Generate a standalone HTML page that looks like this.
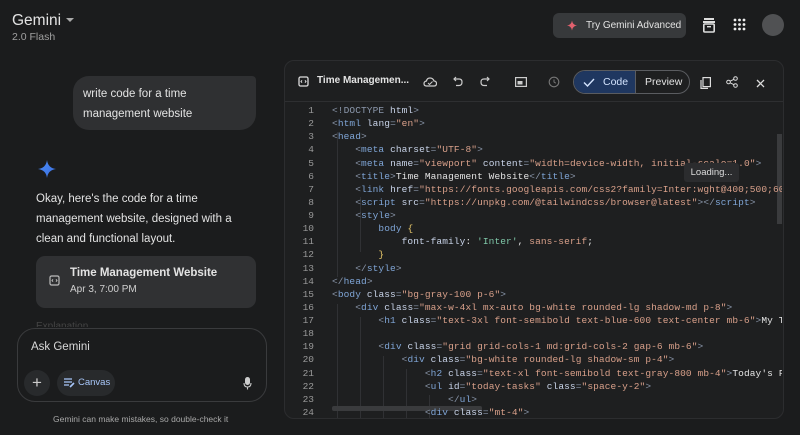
<!DOCTYPE html>
<html><head><style>
*{box-sizing:border-box;margin:0;padding:0}
body{width:800px;height:435px;background:#1b1c1d;font-family:"Liberation Sans",sans-serif;color:#e3e3e3;position:relative;overflow:hidden}
.abs{position:absolute}
.code{font-family:"Liberation Mono",monospace;font-size:9.5px;letter-spacing:0.1px;white-space:pre;color:#e3e3e3}
.ln{position:absolute;left:290px;width:24px;text-align:right;color:#9a9a9a;font-family:"Liberation Mono",monospace;font-size:9.5px}
.p{color:#8b97ab}.t{color:#7fa5d6}.a{color:#c8d3e8}.s{color:#d9a08a}.y{color:#e8c86a}.g{color:#7fc7a8}
</style></head><body>
<div class="abs" style="left:12px;top:12px;font-size:15.5px;color:#e3e3e3">Gemini</div>
<div class="abs" style="left:66px;top:18px;width:0;height:0;border-left:4px solid transparent;border-right:4px solid transparent;border-top:4px solid #aaa"></div>
<div class="abs" style="left:12px;top:31px;font-size:10.5px;color:#a0a0a0">2.0 Flash</div>

<div class="abs" style="left:553px;top:13px;width:133px;height:25px;background:#37393b;border-radius:6px"></div>
<svg class="abs" style="left:567px;top:20px" width="10" height="11" viewBox="0 0 10 10"><path d="M5 0Q5.6 4.4 10 5Q5.6 5.6 5 10Q4.4 5.6 0 5Q4.4 4.4 5 0Z" fill="#e2616e"/></svg>
<div class="abs" style="left:586px;top:20px;font-size:10px;color:#e3e3e3">Try Gemini Advanced</div>
<svg class="abs" style="left:702px;top:17px" width="14" height="16" viewBox="0 0 14 16"><rect x="2" y="1" width="10" height="2" fill="#ddd"/><rect x="1" y="4" width="12" height="2" fill="#ddd"/><rect x="1.8" y="7" width="10.4" height="8" rx="1" fill="none" stroke="#ddd" stroke-width="1.6"/><rect x="5" y="9" width="4" height="1.4" fill="#ddd"/></svg>
<svg class="abs" style="left:733px;top:18px" width="13" height="13"><g fill="#eee"><circle cx="2" cy="2" r="1.4"/><circle cx="6.5" cy="2" r="1.4"/><circle cx="11" cy="2" r="1.4"/><circle cx="2" cy="6.5" r="1.4"/><circle cx="6.5" cy="6.5" r="1.4"/><circle cx="11" cy="6.5" r="1.4"/><circle cx="2" cy="11" r="1.4"/><circle cx="6.5" cy="11" r="1.4"/><circle cx="11" cy="11" r="1.4"/></g></svg>
<div class="abs" style="left:762px;top:14px;width:22px;height:22px;border-radius:50%;background:#505153"></div>

<div class="abs" style="left:73px;top:76px;width:183px;height:54px;background:#2f3032;border-radius:16px 4px 16px 16px"></div>
<div class="abs" style="left:83px;top:85px;font-size:11.5px;line-height:19.5px;color:#e3e3e3">write code for a time<br>management website</div>

<svg class="abs" style="left:37px;top:159px" width="20" height="20" viewBox="0 0 20 20"><defs><linearGradient id="gg" x1="0" y1="0" x2="1" y2="1"><stop offset="0" stop-color="#4a8cf7"/><stop offset="1" stop-color="#3b6fe0"/></linearGradient></defs><path d="M10 1Q11 9 19 10Q11 11 10 19Q9 11 1 10Q9 9 10 1Z" fill="url(#gg)"/></svg>
<div class="abs" style="left:36px;top:189px;font-size:11.5px;line-height:20px;color:#e3e3e3">Okay, here's the code for a time<br>management website, designed with a<br>clean and functional layout.</div>

<div class="abs" style="left:36px;top:256px;width:220px;height:52px;background:#303133;border-radius:9px"></div>
<svg class="abs" style="left:49px;top:275px" width="11" height="11" viewBox="0 0 11 11"><rect x="1" y="1" width="9" height="9" rx="1.5" fill="none" stroke="#bbb" stroke-width="1.2"/><path d="M4 4.3L3 5.5L4 6.7M7 4.3L8 5.5L7 6.7" stroke="#bbb" stroke-width="1" fill="none"/></svg>
<div class="abs" style="left:70px;top:267px;font-size:11.5px;font-weight:bold;color:#e3e3e3">Time Management Website</div>
<div class="abs" style="left:70px;top:284px;font-size:10px;color:#d0d0d0">Apr 3, 7:00 PM</div>
<div class="abs" style="left:36px;top:321px;font-size:10px;color:#444;height:6px;overflow:hidden">Explanation</div>

<div class="abs" style="left:17px;top:328px;width:250px;height:74px;border:1px solid #3a3b3d;border-radius:18px;background:#1b1c1d"></div>
<div class="abs" style="left:31px;top:341px;font-size:11.5px;color:#d8d8d8">Ask Gemini</div>
<div class="abs" style="left:24px;top:370px;width:26px;height:26px;border-radius:50%;background:#282a2c;color:#ccc;font-size:17px;text-align:center;line-height:25px">+</div>
<div class="abs" style="left:57px;top:370px;width:58px;height:26px;border-radius:13px;background:#282a2c"></div>
<svg class="abs" style="left:64px;top:378px" width="11" height="10"><path d="M0 1H8M0 4H8M0 7H5" stroke="#a8c7fa" stroke-width="1.2"/><path d="M6 9L10 5" stroke="#a8c7fa" stroke-width="1.6"/></svg>
<div class="abs" style="left:78px;top:377px;font-size:9.5px;color:#a8c7fa">Canvas</div>
<svg class="abs" style="left:243px;top:377px" width="9" height="13"><rect x="2" y="0" width="5" height="8" rx="2.5" fill="#ccc"/><path d="M1 6Q1 10 4.5 10Q8 10 8 6M4.5 10V12.5" stroke="#ccc" fill="none" stroke-width="1.1"/></svg>
<div class="abs" style="left:53px;top:414px;font-size:8.5px;color:#a8a8a8">Gemini can make mistakes, so double-check it</div>

<div class="abs" style="left:284px;top:60px;width:500px;height:359px;background:#1e1f20;border:1px solid #2c2d2f;border-radius:10px"></div>
<div class="abs" style="left:285px;top:101px;width:498px;height:1px;background:#2e2f31"></div>
<svg class="abs" style="left:298px;top:76px" width="11" height="11" viewBox="0 0 11 11"><rect x="1" y="1" width="9" height="9" rx="1.5" fill="none" stroke="#ddd" stroke-width="1.3"/><path d="M4 4.3L3 5.5L4 6.7M7 4.3L8 5.5L7 6.7" stroke="#ddd" stroke-width="1" fill="none"/></svg>
<div class="abs" style="left:317px;top:75px;font-size:10px;font-weight:bold;color:#e3e3e3">Time Managemen...</div>
<svg class="abs" style="left:423px;top:77px" width="14" height="10"><path d="M3.5 9H11Q13.5 9 13.5 6.5Q13.5 4 11 4Q10 1 7 1Q4 1 3.5 4Q1 4.5 1 6.5Q1 9 3.5 9Z" fill="none" stroke="#ccc" stroke-width="1.2"/><path d="M5 6L6.5 7.5L9.5 4.5" stroke="#ccc" fill="none" stroke-width="1"/></svg>
<svg class="abs" style="left:453px;top:76px" width="10" height="11"><path d="M3 1L1 3L3 5M1 3H6Q9 3 9 6Q9 9.5 6 9.5H3" stroke="#ccc" fill="none" stroke-width="1.2"/></svg>
<svg class="abs" style="left:480px;top:76px" width="10" height="11"><path d="M7 1L9 3L7 5M9 3H4Q1 3 1 6Q1 9.5 4 9.5H7" stroke="#ccc" fill="none" stroke-width="1.2"/></svg>
<svg class="abs" style="left:515px;top:77px" width="12" height="10"><rect x="0.6" y="0.6" width="10.8" height="8.8" fill="none" stroke="#ccc" stroke-width="1.2"/><rect x="2.5" y="4" width="5" height="3.5" fill="#ccc"/></svg>
<svg class="abs" style="left:548px;top:76px" width="12" height="12"><circle cx="6" cy="6" r="4.8" fill="none" stroke="#777" stroke-width="1.1"/><path d="M6 3.5V6L7.8 7.2" stroke="#777" fill="none"/></svg>
<div class="abs" style="left:573px;top:70px;width:117px;height:24px;border:1px solid #5a5c60;border-radius:12px;overflow:hidden">
 <div style="position:absolute;left:0;top:0;width:62px;height:24px;background:#1f3760"></div>
 <div style="position:absolute;left:61px;top:0;width:1px;height:24px;background:#5a5c60"></div>
</div>
<svg class="abs" style="left:583px;top:78px" width="12" height="9"><path d="M1 4.5L4.5 8L11 1" stroke="#d3e3fd" stroke-width="1.4" fill="none"/></svg>
<div class="abs" style="left:603px;top:76px;font-size:10.5px;color:#d3e3fd">Code</div>
<div class="abs" style="left:645px;top:76px;font-size:10.5px;color:#e3e3e3">Preview</div>
<svg class="abs" style="left:700px;top:77px" width="11" height="12"><rect x="3" y="0.6" width="7.4" height="9" fill="none" stroke="#ddd" stroke-width="1.2"/><path d="M1 3V11.4H8" stroke="#ddd" fill="none" stroke-width="1.2"/></svg>
<svg class="abs" style="left:726px;top:76px" width="12" height="12"><circle cx="9.5" cy="2.5" r="1.8" fill="none" stroke="#ddd"/><circle cx="2.5" cy="6" r="1.8" fill="none" stroke="#ddd"/><circle cx="9.5" cy="9.5" r="1.8" fill="none" stroke="#ddd"/><path d="M4 5.2L8 3.3M4 6.8L8 8.7" stroke="#ddd"/></svg>
<svg class="abs" style="left:756px;top:79px" width="9" height="9"><path d="M1 1L8 8M8 1L1 8" stroke="#ddd" stroke-width="1.3"/></svg>

<div class="abs" style="left:285px;top:104px;width:497px;height:314px;overflow:hidden">
<div class="abs" style="left:52px;top:28px;width:1px;height:145px;background:#303134"></div>
<div class="abs" style="left:75px;top:93px;width:1px;height:55px;background:#303134"></div>
<div class="abs" style="left:52px;top:200px;width:1px;height:114px;background:#303134"></div>
<div class="abs" style="left:75px;top:213px;width:1px;height:101px;background:#303134"></div>
<div class="abs" style="left:98px;top:252px;width:1px;height:62px;background:#303134"></div>
<div class="abs" style="left:121px;top:265px;width:1px;height:49px;background:#303134"></div>
<div class="abs" style="left:144px;top:291px;width:1px;height:23px;background:#303134"></div>
<div class="abs" style="left:47px;top:302px;width:150px;height:5px;background:#3a3b3d;border-radius:2px"></div>
<div class="abs" style="left:492px;top:30px;width:5px;height:90px;background:#3a3b3d"></div>
</div>

<div class="ln" style="top:104px;line-height:13.13px">1<br>2<br>3<br>4<br>5<br>6<br>7<br>8<br>9<br>10<br>11<br>12<br>13<br>14<br>15<br>16<br>17<br>18<br>19<br>20<br>21<br>22<br>23<br>24</div>
<div class="abs code" style="left:332px;top:104px;line-height:13.13px;width:450px;overflow:hidden;height:314px"><span class="p">&lt;!DOCTYPE</span> <span class="a">html</span><span class="p">&gt;</span>
<span class="p">&lt;</span><span class="t">html</span> <span class="a">lang</span><span class="p">=</span><span class="s">"en"</span><span class="p">&gt;</span>
<span class="p">&lt;</span><span class="t">head</span><span class="p">&gt;</span>
    <span class="p">&lt;</span><span class="t">meta</span> <span class="a">charset</span><span class="p">=</span><span class="s">"UTF-8"</span><span class="p">&gt;</span>
    <span class="p">&lt;</span><span class="t">meta</span> <span class="a">name</span><span class="p">=</span><span class="s">"viewport"</span> <span class="a">content</span><span class="p">=</span><span class="s">"width=device-width, initial-scale=1.0"</span><span class="p">&gt;</span>
    <span class="p">&lt;</span><span class="t">title</span><span class="p">&gt;</span>Time Management Website<span class="p">&lt;/</span><span class="t">title</span><span class="p">&gt;</span>
    <span class="p">&lt;</span><span class="t">link</span> <span class="a">href</span><span class="p">=</span><span class="s">"https://fonts.googleapis.com/css2?family=Inter:wght@400;500;600"</span>
    <span class="p">&lt;</span><span class="t">script</span> <span class="a">src</span><span class="p">=</span><span class="s">"https://unpkg.com/@tailwindcss/browser@latest"</span><span class="p">&gt;&lt;/</span><span class="t">script</span><span class="p">&gt;</span>
    <span class="p">&lt;</span><span class="t">style</span><span class="p">&gt;</span>
        <span class="t">body</span> <span class="y">{</span>
            <span class="a">font-family</span>: <span class="g">'Inter'</span>, <span class="s">sans-serif</span>;
        <span class="y">}</span>
    <span class="p">&lt;/</span><span class="t">style</span><span class="p">&gt;</span>
<span class="p">&lt;/</span><span class="t">head</span><span class="p">&gt;</span>
<span class="p">&lt;</span><span class="t">body</span> <span class="a">class</span><span class="p">=</span><span class="s">"bg-gray-100 p-6"</span><span class="p">&gt;</span>
    <span class="p">&lt;</span><span class="t">div</span> <span class="a">class</span><span class="p">=</span><span class="s">"max-w-4xl mx-auto bg-white rounded-lg shadow-md p-8"</span><span class="p">&gt;</span>
        <span class="p">&lt;</span><span class="t">h1</span> <span class="a">class</span><span class="p">=</span><span class="s">"text-3xl font-semibold text-blue-600 text-center mb-6"</span><span class="p">&gt;</span>My Time

        <span class="p">&lt;</span><span class="t">div</span> <span class="a">class</span><span class="p">=</span><span class="s">"grid grid-cols-1 md:grid-cols-2 gap-6 mb-6"</span><span class="p">&gt;</span>
            <span class="p">&lt;</span><span class="t">div</span> <span class="a">class</span><span class="p">=</span><span class="s">"bg-white rounded-lg shadow-sm p-4"</span><span class="p">&gt;</span>
                <span class="p">&lt;</span><span class="t">h2</span> <span class="a">class</span><span class="p">=</span><span class="s">"text-xl font-semibold text-gray-800 mb-4"</span><span class="p">&gt;</span>Today's Focus
                <span class="p">&lt;</span><span class="t">ul</span> <span class="a">id</span><span class="p">=</span><span class="s">"today-tasks"</span> <span class="a">class</span><span class="p">=</span><span class="s">"space-y-2"</span><span class="p">&gt;</span>
                    <span class="p">&lt;/</span><span class="t">ul</span><span class="p">&gt;</span>
                <span class="p">&lt;</span><span class="t">div</span> <span class="a">class</span><span class="p">=</span><span class="s">"mt-4"</span><span class="p">&gt;</span></div>
<div class="abs" style="left:684px;top:163px;width:55px;height:19px;background:#2b2c2e;border-radius:3px;font-size:9.5px;color:#ddd;line-height:19px;text-align:center">Loading...</div>
</body></html>
